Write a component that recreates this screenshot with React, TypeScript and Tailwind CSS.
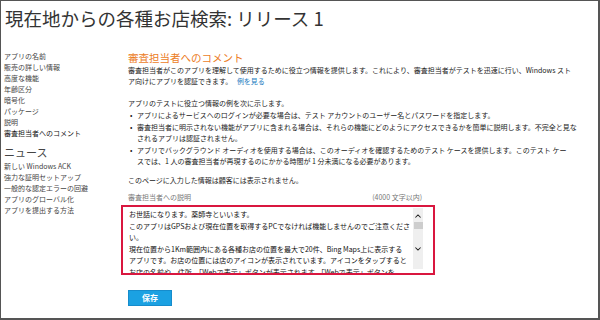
const navItems = [
  'アプリの名前',
  '販売の詳しい情報',
  '高度な機能',
  '年齢区分',
  '暗号化',
  'パッケージ',
  '説明',
]

const newsItems = [
  '新しい Windows ACK',
  '強力な証明セットアップ',
  '一般的な認定エラーの回避',
  'アプリのグローバル化',
  'アプリを提出する方法',
]

const noteLines = [
  'お世話になります。薬師寺といいます。',
  'このアプリはGPSおよび現在位置を取得するPCでなければ機能しませんのでご注意くださ',
  'い。',
  '現在位置から1Km範囲内にある各種お店の位置を最大で20件、Bing Maps上に表示する',
  'アプリです。お店の位置には店のアイコンが表示されています。アイコンをタップすると',
  'お店の名前や、住所、「Webで表示」ボタンが表示されます。「Webで表示」ボタンを',
]

const font = { fontFamily: '"Noto Sans CJK JP", "Noto Sans", sans-serif' }

function Bullet({ lines }: { lines: string[] }) {
  return (
    <div className="mt-px flex">
      <span className="w-[9px] shrink-0 pl-[2px]">•</span>
      <div>
        {lines.map((l) => (
          <div key={l} className="whitespace-nowrap">{l}</div>
        ))}
      </div>
    </div>
  )
}

export default function App() {
  return (
    <div
      style={font}
      className="h-[320px] w-[600px] overflow-hidden border border-b-2 border-r-2 border-[#555] bg-white text-[#333]"
    >
      <h1 className="px-[4px] pt-[5px] text-[18.5px] leading-[24px] text-[#333]">
        現在地からの各種お店検索: リリース 1
      </h1>

      <div className="mt-[21px] flex">
        {/* left nav */}
        <div className="w-[123px] shrink-0 pl-[3px] text-[7px] leading-[11px] text-[#444]">
          {navItems.map((n) => (
            <div key={n}>{n}</div>
          ))}
          <div className="text-[#111]">審査担当者へのコメント</div>
          <div className="mt-[6px] text-[11px] leading-[15px] text-[#444]">ニュース</div>
          <div className="mt-px">
            {newsItems.map((n) => (
              <div key={n}>{n}</div>
            ))}
          </div>
        </div>

        {/* main */}
        <div className="flex-1 pl-[4px] text-[7px] leading-[11px] text-[#222]">
          <h2 className="text-[10.5px] leading-[14px] text-[#ec7d1f]">審査担当者へのコメント</h2>
          <div>
            <div className="whitespace-nowrap">
              審査担当者がこのアプリを理解して使用するために役立つ情報を提供します。これにより、審査担当者がテストを迅速に行い、Windows スト
            </div>
            <div className="whitespace-nowrap">
              ア向けにアプリを認証できます。 <span className="ml-[3px] text-[#1e7cc0]">例を見る</span>
            </div>
          </div>

          <div className="mt-[11px]">アプリのテストに役立つ情報の例を次に示します。</div>
          <Bullet lines={['アプリによるサービスへのログインが必要な場合は、テスト アカウントのユーザー名とパスワードを指定します。']} />
          <Bullet
            lines={[
              '審査担当者に明示されない機能がアプリに含まれる場合は、それらの機能にどのようにアクセスできるかを簡単に説明します。不完全と見な',
              'されるアプリは認証されません。',
            ]}
          />
          <Bullet
            lines={[
              'アプリでバックグラウンド オーディオを使用する場合は、このオーディオを確認するためのテスト ケースを提供します。このテスト ケー',
              'スでは、1 人の審査担当者が再現するのにかかる時間が 1 分未満になる必要があります。',
            ]}
          />

          <div className="mt-[8px]">このページに入力した情報は顧客には表示されません。</div>

          <div className="mt-[6px] flex w-[294px] justify-between text-[#777]">
            <span>審査担当者への説明</span>
            <span>(4000 文字以内)</span>
          </div>

          {/* textarea */}
          <div className="ml-[-7px] mt-[2px] flex h-[70px] w-[314px] border-2 border-[#d9173f] bg-white">
            <div className="h-full flex-1 overflow-hidden pl-[6px] pt-[2px] text-[7px] leading-[11.5px] text-[#111]">
              {noteLines.map((l) => (
                <div key={l} className="whitespace-nowrap">{l}</div>
              ))}
            </div>
            <div className="mr-[10px] mt-[1px] mb-[4px] flex w-[10px] flex-col items-center bg-[#efefef]">
              <svg viewBox="0 0 10 8" className="mt-[5px] h-[6px] w-[8px]">
                <path d="M1.5 6 L5 2.5 L8.5 6" fill="none" stroke="#222" strokeWidth="1.4" />
              </svg>
              <div className="mt-[3px] h-[7px] w-[9px] bg-[#cdcdcd]" />
              <div className="flex-1" />
              <svg viewBox="0 0 10 8" className="mb-[17px] h-[6px] w-[8px]">
                <path d="M1.5 2 L5 5.5 L8.5 2" fill="none" stroke="#222" strokeWidth="1.4" />
              </svg>
            </div>
          </div>

          <button className="mt-[15px] flex h-[16px] w-[44px] items-center justify-center border border-[#168ccc] bg-[#1ba1e2] text-[8px] font-bold leading-none text-white">
            保存
          </button>
        </div>
      </div>
    </div>
  )
}
